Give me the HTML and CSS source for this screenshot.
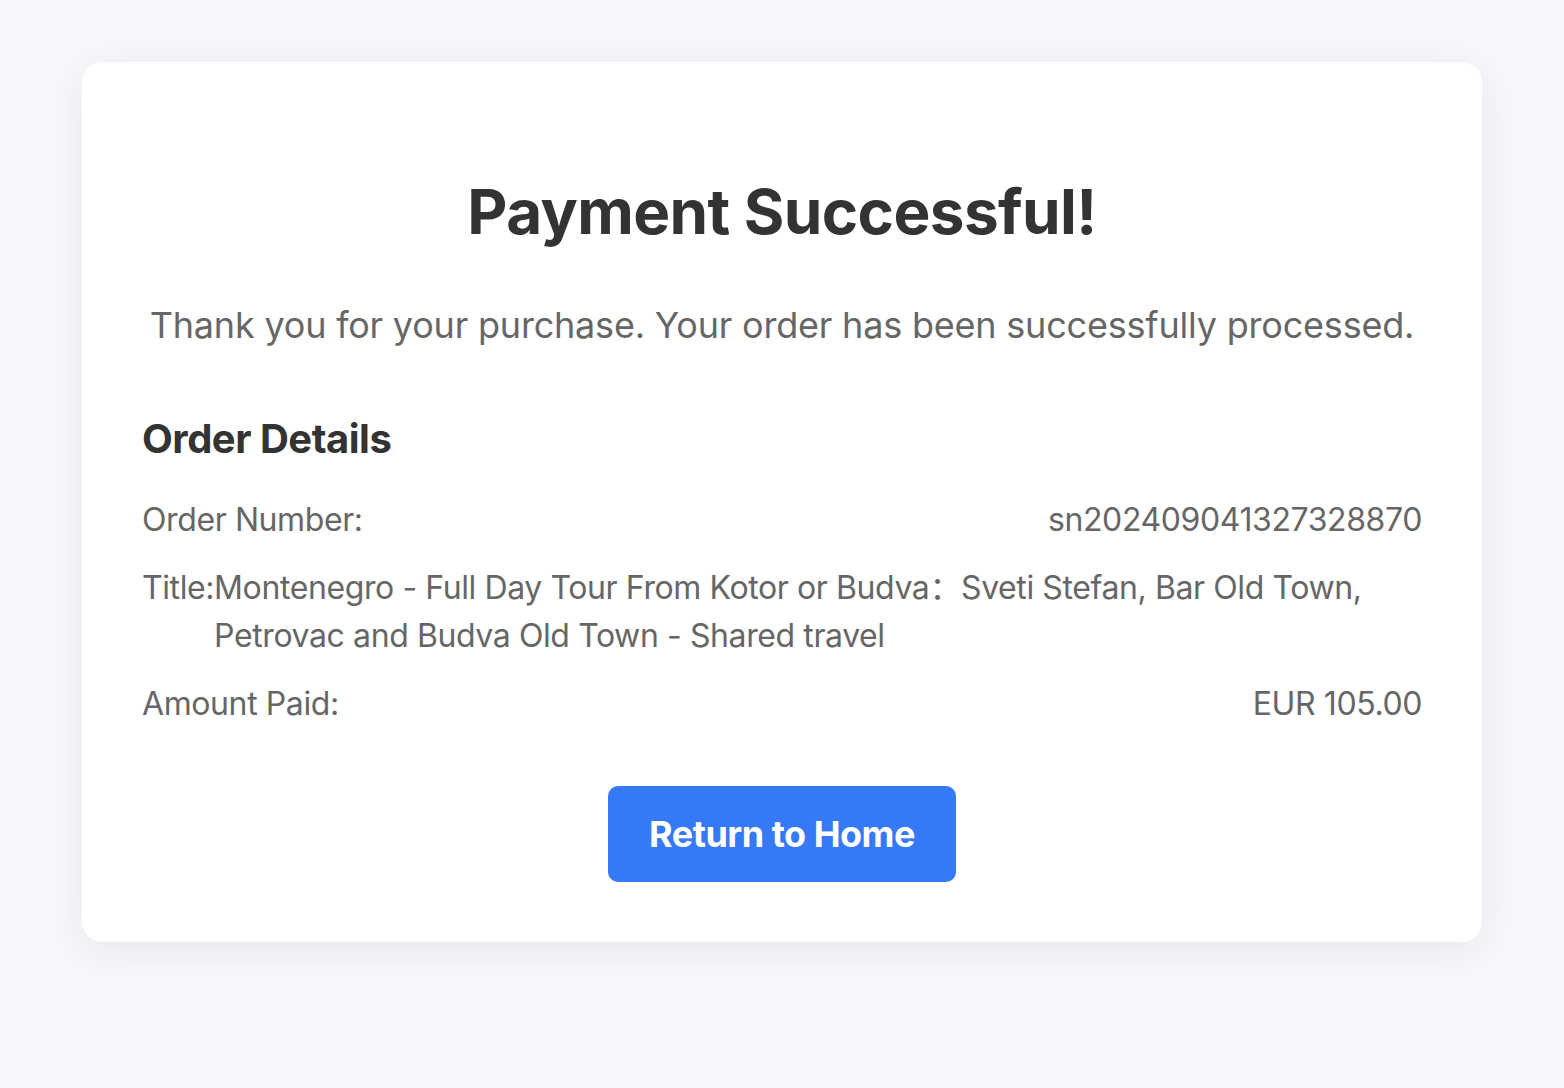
FILE: index.html
```html
<!DOCTYPE html>
<html lang="en">
<head>
    <meta charset="UTF-8">
    <meta name="viewport" content="width=device-width, initial-scale=1.0">
    <title>Payment Successful</title>
    <link rel="stylesheet" href="styles.css">
</head>
<body>
    <div class="container">
        <div class="card">
            <h1 class="title">Payment Successful!</h1>
            <p class="subtitle">Thank you for your purchase. Your order has been successfully processed.</p>

            <div class="order-details">
                <h2 class="section-title">Order Details</h2>
                <div class="detail-row">
                    <span class="label">Order Number:</span>
                    <span class="value">sn202409041327328870</span>
                </div>
                <div class="detail-row">
                    <span class="label">Title:</span>
                    <span class="value wrap">Montenegro - Full Day Tour From Kotor or Budva：Sveti Stefan, Bar Old Town, Petrovac and Budva Old Town - Shared travel</span>
                </div>
                <div class="detail-row">
                    <span class="label">Amount Paid:</span>
                    <span class="value">EUR 105.00</span>
                </div>
            </div>

            <div class="actions">
                <button class="home-button">Return to Home</button>
            </div>
        </div>
    </div>
</body>
</html>
```

FILE: styles.css
```css
* {
    margin: 0;
    padding: 0;
    box-sizing: border-box;
}
body {
    font-family: Inter, "Noto Sans CJK SC", sans-serif;
    background: #f7f8fb;
    color: #333;
    min-height: 100vh;
    padding: 62px 81px;
}
.container {
    max-width: 1400px;
    margin: 0 auto;
}
.card {
    background: #fff;
    border-radius: 20px;
    box-shadow: 0 8px 40px rgba(30, 40, 70, 0.08);
    padding: 110px 60px 60px;
}
.title {
    text-align: center;
    font-size: 62px;
    font-weight: 700;
    line-height: 80px;
    color: #333;
    letter-spacing: -0.6px;
}
.subtitle {
    text-align: center;
    font-size: 36px;
    line-height: 54px;
    color: #666;
    margin-top: 46px;
    letter-spacing: -0.2px;
}
.order-details {
    margin-top: 60px;
}
.section-title {
    font-size: 40px;
    font-weight: 700;
    line-height: 54px;
    color: #333;
    margin-bottom: 30px;
    letter-spacing: -0.5px;
}
.detail-row {
    display: flex;
    justify-content: space-between;
    font-size: 32px;
    line-height: 48px;
    color: #666;
    margin-bottom: 20px;
    letter-spacing: -0.4px;
}
.detail-row .value.wrap {
    flex: 1;
    text-align: left;
}
.actions {
    display: flex;
    justify-content: center;
    margin-top: 58px;
}
.home-button {
    width: 348px;
    height: 96px;
    background: #3579f6;
    color: #fff;
    border: none;
    border-radius: 10px;
    font-family: Inter, sans-serif;
    font-size: 36px;
    font-weight: 700;
    letter-spacing: -0.5px;
    cursor: pointer;
}
```
